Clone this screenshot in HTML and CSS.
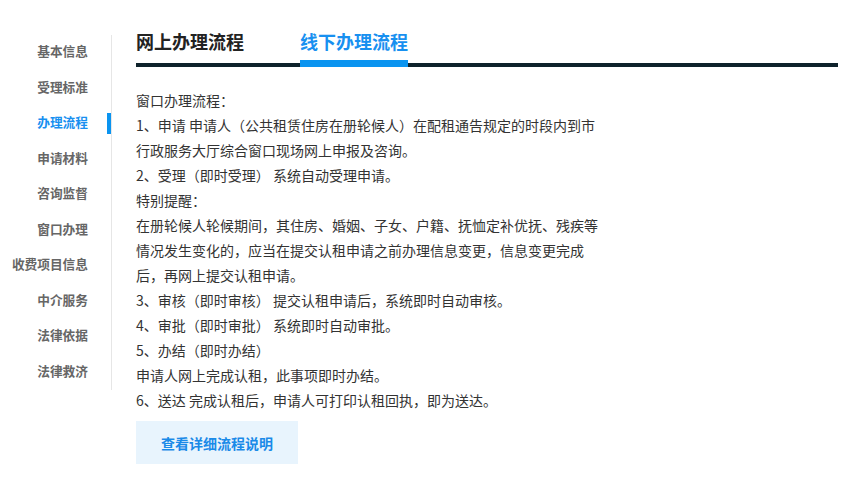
FILE: index.html
```html
<!DOCTYPE html>
<html lang="zh-CN">
<head>
<meta charset="utf-8">
<title>办理流程</title>
<link rel="stylesheet" href="styles.css">
</head>
<body>
<div class="page">
  <nav class="side">
    <a class="side-item">基本信息</a>
    <a class="side-item">受理标准</a>
    <a class="side-item active">办理流程</a>
    <a class="side-item">申请材料</a>
    <a class="side-item">咨询监督</a>
    <a class="side-item">窗口办理</a>
    <a class="side-item">收费项目信息</a>
    <a class="side-item">中介服务</a>
    <a class="side-item">法律依据</a>
    <a class="side-item">法律救济</a>
  </nav>
  <main class="main">
    <div class="tabs">
      <div class="tab">网上办理流程</div>
      <div class="tab active">线下办理流程</div>
    </div>
    <div class="content">
      <p>窗口办理流程：</p>
      <p>1、申请 申请人（公共租赁住房在册轮候人）在配租通告规定的时段内到市<br>行政服务大厅综合窗口现场网上申报及咨询。</p>
      <p>2、受理（即时受理） 系统自动受理申请。</p>
      <p>特别提醒：</p>
      <p>在册轮候人轮候期间，其住房、婚姻、子女、户籍、抚恤定补优抚、残疾等<br>情况发生变化的，应当在提交认租申请之前办理信息变更，信息变更完成<br>后，再网上提交认租申请。</p>
      <p>3、审核（即时审核） 提交认租申请后，系统即时自动审核。</p>
      <p>4、审批（即时审批） 系统即时自动审批。</p>
      <p>5、办结（即时办结）</p>
      <p>申请人网上完成认租，此事项即时办结。</p>
      <p>6、送达 完成认租后，申请人可打印认租回执，即为送达。</p>
    </div>
    <a class="btn">查看详细流程说明</a>
  </main>
</div>
</body>
</html>
```

FILE: styles.css
```css
* { box-sizing: border-box; }
html, body {
  margin: 0;
  padding: 0;
  background: #fff;
  font-family: "Noto Sans CJK SC", "Noto Sans", sans-serif;
  text-spacing-trim: space-all;
}
.page {
  display: flex;
  align-items: flex-start;
}
.side {
  width: 112px;
  margin-top: 35px;
  border-right: 1px solid #e6e6e6;
  display: flex;
  flex-direction: column;
}
.side-item {
  position: relative;
  display: block;
  height: 35.5px;
  line-height: 32px;
  padding-right: 23px;
  text-align: right;
  font-size: 12.7px;
  font-weight: bold;
  color: #666;
  white-space: nowrap;
}
.side-item.active {
  color: #1890f0;
}
.side-item.active::after {
  content: "";
  position: absolute;
  right: 0;
  top: 7px;
  width: 4px;
  height: 21px;
  background: #0a94f0;
}
.main {
  width: 702px;
  margin-left: 24px;
  margin-top: 28px;
}
.tabs {
  display: flex;
  gap: 56px;
  border-bottom: 4px solid #0e222b;
}
.tab {
  font-size: 18px;
  font-weight: bold;
  line-height: 26px;
  padding-bottom: 6px;
  border-bottom: 7px solid transparent;
  margin-bottom: -4px;
  color: #222;
  white-space: nowrap;
}
.tab.active {
  color: #1890f0;
  border-bottom-color: #0a94f0;
}
.content {
  padding-top: 21px;
  font-size: 14px;
  line-height: 25px;
  color: #333;
}
.content p {
  margin: 0;
  white-space: nowrap;
}
.btn {
  display: flex;
  align-items: center;
  justify-content: center;
  width: 162px;
  height: 43px;
  margin-top: 8px;
  background: #e8f4fd;
  color: #1a8ae8;
  font-size: 14px;
  font-weight: bold;
}
```
